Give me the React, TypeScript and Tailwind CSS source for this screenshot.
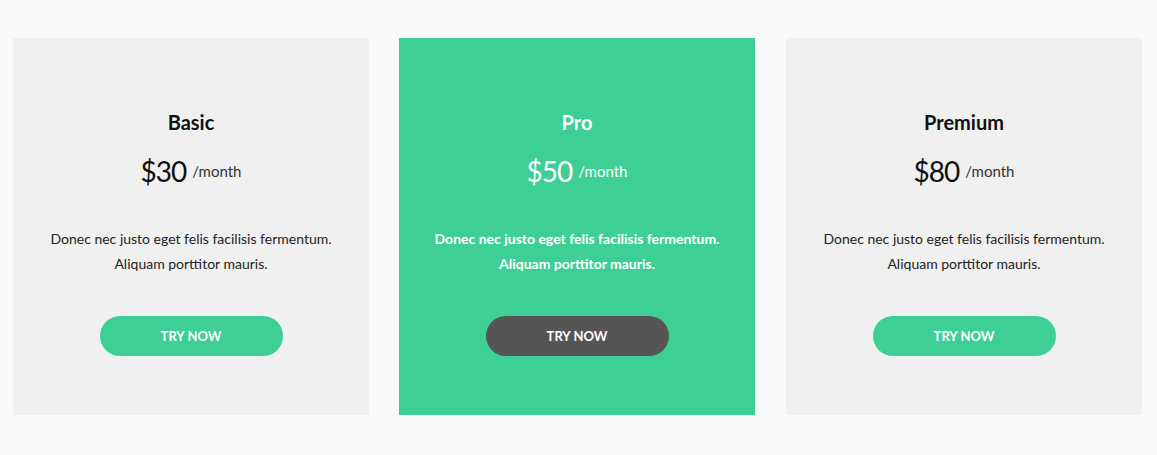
const plans = [
  { name: "Basic", price: "$30", featured: false },
  { name: "Pro", price: "$50", featured: true },
  { name: "Premium", price: "$80", featured: false },
];

const PlanCard = ({ name, price, featured }: { name: string; price: string; featured: boolean }) => {
  return (
    <div
      className={`w-[356px] h-[377px] flex flex-col items-center pt-[71px] ${
        featured ? "bg-[#3ecf96] text-white" : "bg-[#f0f0f0] text-[#111111]"
      }`}
    >
      <h3 className="text-[20px] font-bold leading-[26px]">{name}</h3>
      <div className="mt-[18px] flex items-center leading-[36px]">
        <span className="text-[28px] tracking-[-1px]">{price}</span>
        <span className={`ml-[6px] text-[15px] ${featured ? "text-white" : "text-[#333333]"}`}>/month</span>
      </div>
      <p
        className={`mt-[37px] text-[14px] leading-[25px] text-center ${
          featured ? "font-bold" : "text-[#222222]"
        }`}
      >
        Donec nec justo eget felis facilisis fermentum.
        <br />
        Aliquam porttitor mauris.
      </p>
      <button
        className={`mt-[40px] w-[183px] h-[40px] rounded-full text-white text-[13px] font-bold pt-px ${
          featured ? "bg-[#555555]" : "bg-[#3ecf96]"
        }`}
      >
        TRY NOW
      </button>
    </div>
  );
};

export default function App() {
  return (
    <div className="w-[1157px] h-[455px] bg-[#f9f9f9] pt-[38px] pl-[13px] font-['Lato',sans-serif]">
      <div className="flex gap-[30px]">
        {plans.map((p, i) => (
          <div key={p.name} className={i === 2 ? "ml-px" : ""}>
            <PlanCard {...p} />
          </div>
        ))}
      </div>
    </div>
  );
}
